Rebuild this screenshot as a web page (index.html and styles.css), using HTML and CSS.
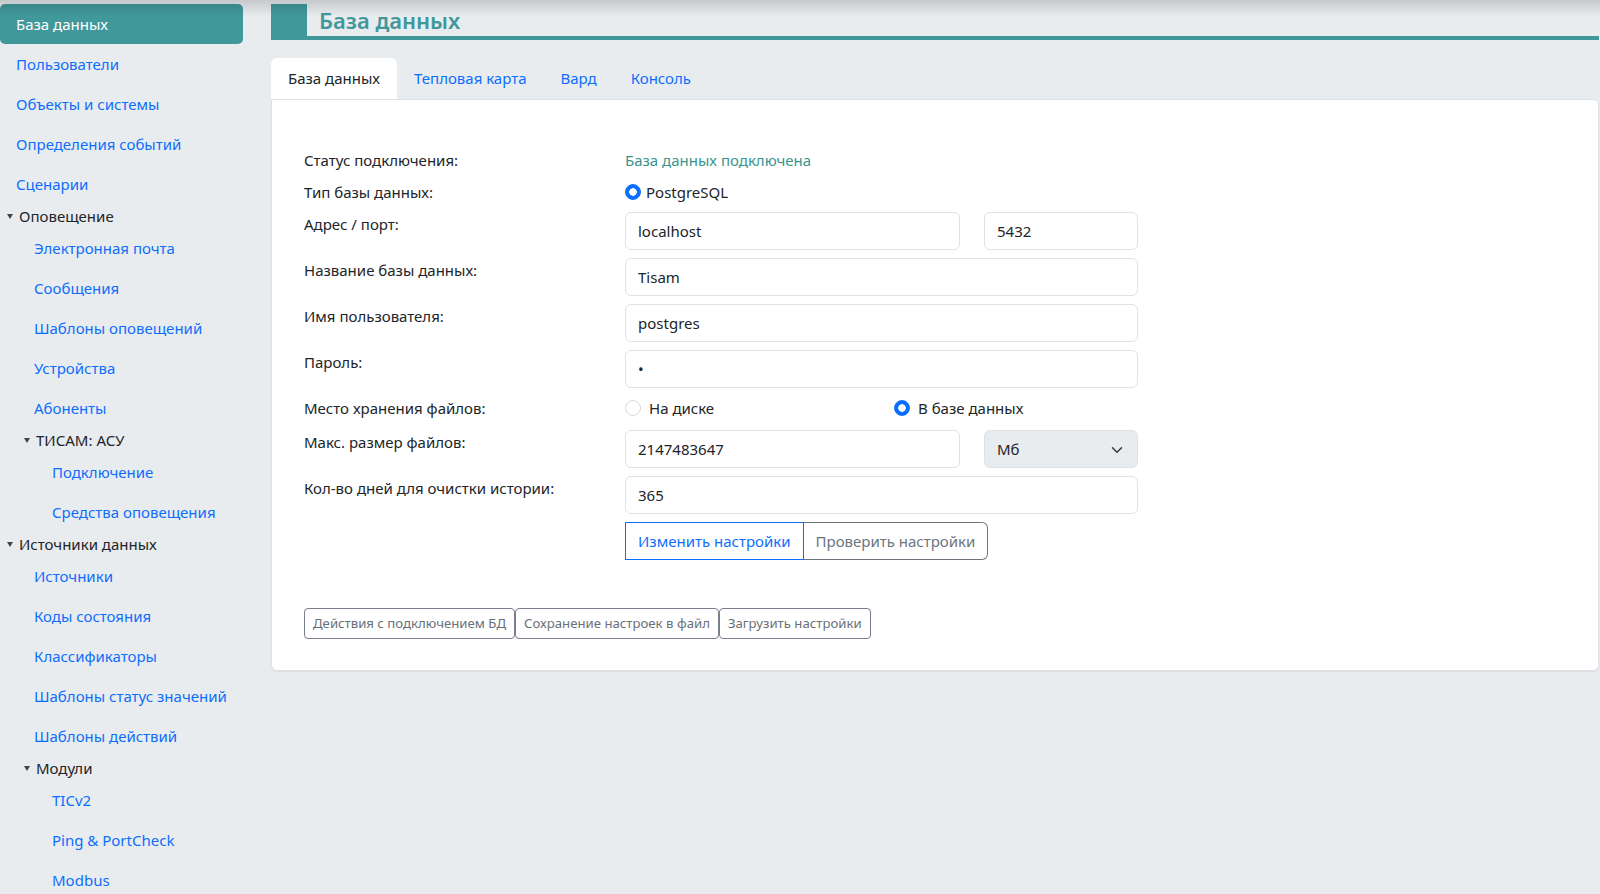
FILE: index.html
```html
<!DOCTYPE html>
<html lang="ru">
<head>
    <meta charset="UTF-8">
    <meta name="viewport" content="width=device-width, initial-scale=1.0">
    <title>База данных</title>
    <link rel="stylesheet" href="styles.css">
</head>
<body>
    <nav class="sidebar">
        <a class="side-link active" href="#">База данных</a>
        <a class="side-link" href="#">Пользователи</a>
        <a class="side-link" href="#">Объекты и системы</a>
        <a class="side-link" href="#">Определения событий</a>
        <a class="side-link" href="#">Сценарии</a>
        <div class="side-group"><span class="caret"></span>Оповещение</div>
        <a class="side-link lvl2" href="#">Электронная почта</a>
        <a class="side-link lvl2" href="#">Сообщения</a>
        <a class="side-link lvl2" href="#">Шаблоны оповещений</a>
        <a class="side-link lvl2" href="#">Устройства</a>
        <a class="side-link lvl2" href="#">Абоненты</a>
        <div class="side-group lvl2"><span class="caret"></span>ТИСАМ: АСУ</div>
        <a class="side-link lvl3" href="#">Подключение</a>
        <a class="side-link lvl3" href="#">Средства оповещения</a>
        <div class="side-group"><span class="caret"></span>Источники данных</div>
        <a class="side-link lvl2" href="#">Источники</a>
        <a class="side-link lvl2" href="#">Коды состояния</a>
        <a class="side-link lvl2" href="#">Классификаторы</a>
        <a class="side-link lvl2" href="#">Шаблоны статус значений</a>
        <a class="side-link lvl2" href="#">Шаблоны действий</a>
        <div class="side-group lvl2"><span class="caret"></span>Модули</div>
        <a class="side-link lvl3" href="#">TICv2</a>
        <a class="side-link lvl3" href="#">Ping &amp; PortCheck</a>
        <a class="side-link lvl3" href="#">Modbus</a>
    </nav>

    <main class="main">
        <header class="page-head">
            <span class="head-mark"></span>
            <h1>База данных</h1>
        </header>

        <div class="tabs">
            <a class="tab active" href="#">База данных</a>
            <a class="tab" href="#">Тепловая карта</a>
            <a class="tab" href="#">Вард</a>
            <a class="tab" href="#">Консоль</a>
        </div>

        <section class="card">
            <div class="form">
                <label class="form-label">Статус подключения:</label>
                <div class="status">База данных подключена</div>

                <label class="form-label">Тип базы данных:</label>
                <div class="radio-line single">
                    <label class="radio tight"><input type="radio" name="dbtype" checked><span>PostgreSQL</span></label>
                </div>

                <label class="form-label">Адрес / порт:</label>
                <div class="pair">
                    <input class="field" type="text" value="localhost">
                    <input class="field" type="text" value="5432">
                </div>

                <label class="form-label">Название базы данных:</label>
                <input class="field" type="text" value="Tisam">

                <label class="form-label">Имя пользователя:</label>
                <input class="field" type="text" value="postgres">

                <label class="form-label">Пароль:</label>
                <input class="field" type="password" value="1">

                <label class="form-label">Место хранения файлов:</label>
                <div class="radio-line storage">
                    <label class="radio"><input type="radio" name="storage"><span>На диске</span></label>
                    <label class="radio"><input type="radio" name="storage" checked><span>В базе данных</span></label>
                </div>

                <label class="form-label">Макс. размер файлов:</label>
                <div class="pair">
                    <input class="field" type="text" value="2147483647">
                    <div class="select-wrap">
                        <select class="field select">
                            <option>Мб</option>
                            <option>Кб</option>
                            <option>Гб</option>
                        </select>
                        <svg class="chevron" viewBox="0 0 16 16" width="12" height="12">
                            <path d="M2 5l6 6 6-6" fill="none" stroke="#343a40" stroke-width="2" stroke-linecap="round" stroke-linejoin="round"/>
                        </svg>
                    </div>
                </div>

                <label class="form-label">Кол-во дней для очистки истории:</label>
                <input class="field" type="text" value="365">

                <span></span>
                <div class="btn-group">
                    <button class="btn btn-primary-outline">Изменить настройки</button>
                    <button class="btn btn-secondary-outline">Проверить настройки</button>
                </div>
            </div>

            <div class="toolbar">
                <button class="btn-sm">Действия с подключением БД</button>
                <button class="btn-sm">Сохранение настроек в файл</button>
                <button class="btn-sm">Загрузить настройки</button>
            </div>
        </section>
    </main>
</body>
</html>
```

FILE: styles.css
```css
body {
    margin: 0;
    background-color: #e9ecef;
    color: #212529;
    font-family: "Noto Sans", "Open Sans", sans-serif;
    font-size: 15px;
    line-height: 24px;
    display: flex;
    overflow: hidden;
}
/* soft shade along the top edge of the window */
body::before {
    content: "";
    position: fixed;
    top: 0;
    left: 0;
    right: 0;
    height: 16px;
    background: linear-gradient(rgba(0, 0, 0, 0.15), rgba(0, 0, 0, 0));
    pointer-events: none;
    z-index: 5;
}
a {
    text-decoration: none;
}

/* sidebar */
.sidebar {
    width: 243px;
    flex-shrink: 0;
    padding-top: 4px;
}
.side-link {
    display: block;
    height: 40px;
    line-height: 40px;
    padding-left: 16px;
    color: #0d6efd;
    white-space: nowrap;
}
.side-link.lvl2 {
    padding-left: 34px;
}
.side-link.lvl3 {
    padding-left: 52px;
}
.side-link.active {
    background-color: #41989b;
    color: #fff;
    border-radius: 5px;
}
.side-group {
    display: flex;
    align-items: center;
    height: 24px;
    padding-left: 7px;
    color: #212529;
}
.side-group.lvl2 {
    padding-left: 24px;
}
.caret {
    width: 0;
    height: 0;
    border-left: 3px solid transparent;
    border-right: 3px solid transparent;
    border-top: 5px solid #444;
    margin-right: 6px;
}

/* main column */
.main {
    flex: 1;
    margin-left: 28px;
    margin-right: 1px;
}
.page-head {
    display: flex;
    align-items: center;
    height: 32px;
    margin-top: 4px;
    border-bottom: 4px solid #41989b;
}
.head-mark {
    align-self: stretch;
    width: 36px;
    background-color: #41989b;
}
.page-head h1 {
    margin: 0 0 0 12px;
    font-size: 22px;
    font-weight: 600;
    color: #41989b;
    line-height: 32px;
}

.tabs {
    display: flex;
    margin-top: 18px;
}
.tab {
    padding: 7px 16px 9px;
    border: 1px solid transparent;
    border-bottom: none;
    color: #0d6efd;
    border-radius: 6px 6px 0 0;
}
.tab.active {
    background-color: #fff;
    color: #212529;
}

.card {
    background-color: #fff;
    border: 1px solid #dee2e6;
    border-radius: 0 6px 6px 6px;
    padding: 48px 32px 31px;
    box-shadow: 0 1px 2px rgba(0, 0, 0, 0.06);
}

/* settings form */
.form {
    display: grid;
    grid-template-columns: 321px 513px;
    row-gap: 8px;
    align-items: start;
}
.form-label {
    line-height: 24px;
}
.status {
    color: #3a9590;
}
.radio-line {
    display: flex;
    height: 26px;
    align-items: flex-start;
}
.radio-line.single {
    height: 24px;
}
.radio-line.storage {
    display: grid;
    grid-template-columns: 269px 1fr;
}
.radio {
    display: flex;
    align-items: center;
}
.radio input {
    appearance: none;
    width: 16px;
    height: 16px;
    margin: 0 8px 0 0;
    border: 1px solid #d6dadf;
    border-radius: 50%;
    background-color: #fff;
}
.radio.tight input {
    margin-right: 5px;
}
.radio input:checked {
    border-color: #0d6efd;
    background: radial-gradient(circle, #fff 0 3.5px, #0d6efd 4px);
}
.pair {
    display: grid;
    grid-template-columns: 1fr 154px;
    column-gap: 24px;
}
.field {
    box-sizing: border-box;
    width: 100%;
    height: 38px;
    padding: 6px 12px;
    border: 1px solid #dee2e6;
    border-radius: 6px;
    background-color: #fff;
    color: #212529;
    font-family: inherit;
    font-size: 15px;
    line-height: 24px;
}
.select-wrap {
    position: relative;
}
.select {
    appearance: none;
    background-color: #e9ecef;
}
.chevron {
    position: absolute;
    right: 15px;
    top: 14px;
    pointer-events: none;
}

.btn-group {
    display: flex;
}
.btn {
    height: 38px;
    padding: 6px 12px;
    background-color: #fff;
    font-family: inherit;
    font-size: 15px;
    line-height: 24px;
    cursor: pointer;
}
.btn-primary-outline {
    border: 1px solid #0d6efd;
    color: #0d6efd;
    border-radius: 0;
}
.btn-secondary-outline {
    border: 1px solid #6c757d;
    border-left: none;
    color: #6c757d;
    border-radius: 0 6px 6px 0;
}

.toolbar {
    display: flex;
    margin-top: 48px;
}
.btn-sm {
    height: 31px;
    padding: 4px 8px;
    border: 1px solid #7a7f8e;
    border-radius: 4px;
    background-color: #fff;
    color: #6a7078;
    font-family: inherit;
    font-size: 13.2px;
    line-height: 21px;
    cursor: pointer;
}
```
